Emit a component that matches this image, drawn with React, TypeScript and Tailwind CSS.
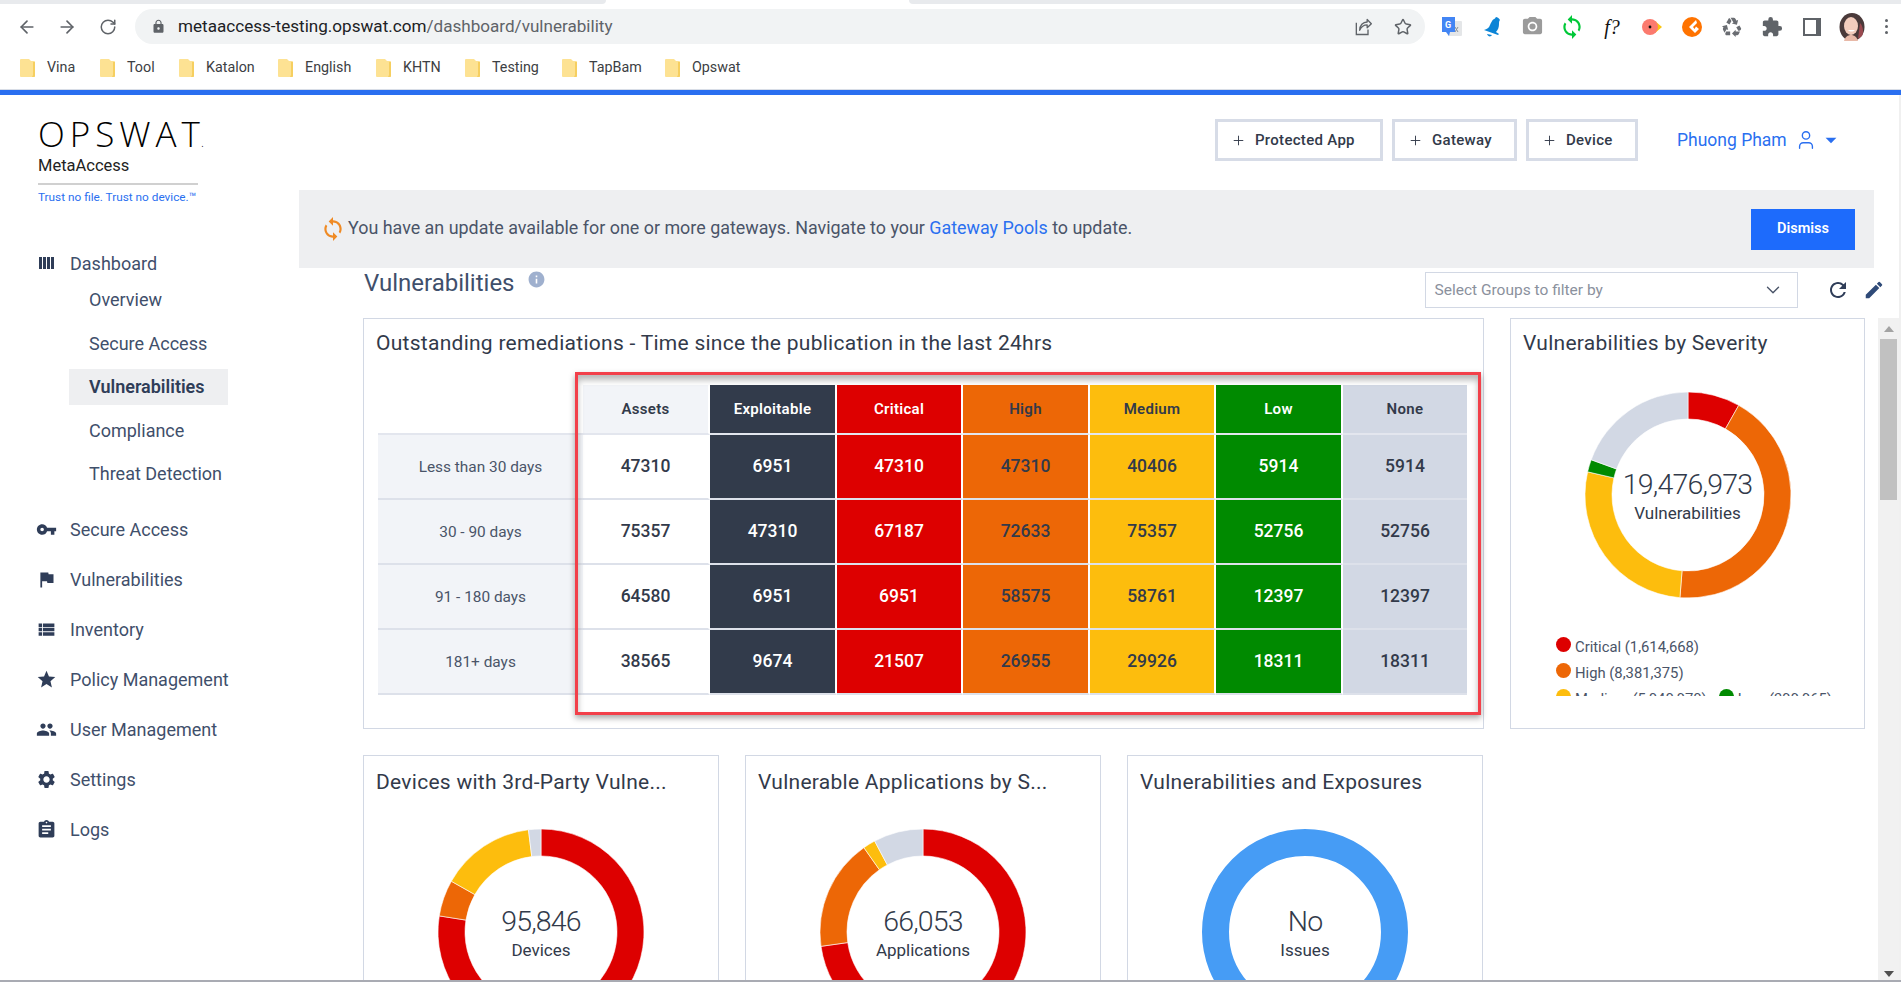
import { ArrowLeft, ArrowRight, RotateCw, Star, Plus, User, ChevronDown } from 'lucide-react';
import {
  MdVpnKey, MdFlag, MdViewList, MdStar, MdPeople, MdSettings, MdAssignment,
  MdLock, MdCameraAlt, MdSync, MdExtension, MdRecycling, MdRefresh, MdEdit, MdInfo, MdArrowDropDown,
} from 'react-icons/md';

const bookmarks = [
  { name: 'Vina', w: 'w-[80px]' },
  { name: 'Tool', w: 'w-[79px]' },
  { name: 'Katalon', w: 'w-[99px]' },
  { name: 'English', w: 'w-[98px]' },
  { name: 'KHTN', w: 'w-[89px]' },
  { name: 'Testing', w: 'w-[97px]' },
  { name: 'TapBam', w: 'w-[103px]' },
  { name: 'Opswat', w: 'w-[90px]' },
];

const subNav = ['Overview', 'Secure Access', 'Vulnerabilities', 'Compliance', 'Threat Detection'];

const mainNav = [
  { name: 'Secure Access', icon: MdVpnKey },
  { name: 'Vulnerabilities', icon: MdFlag },
  { name: 'Inventory', icon: MdViewList },
  { name: 'Policy Management', icon: MdStar },
  { name: 'User Management', icon: MdPeople },
  { name: 'Settings', icon: MdSettings },
  { name: 'Logs', icon: MdAssignment },
];

const rows = [
  { label: 'Less than 30 days', values: ['47310', '6951', '47310', '47310', '40406', '5914', '5914'] },
  { label: '30 - 90 days', values: ['75357', '47310', '67187', '72633', '75357', '52756', '52756'] },
  { label: '91 - 180 days', values: ['64580', '6951', '6951', '58575', '58761', '12397', '12397'] },
  { label: '181+ days', values: ['38565', '9674', '21507', '26955', '29926', '18311', '18311'] },
];

const columns = [
  { name: 'Assets', head: 'bg-[#f2f4f8] text-[#323a4a]', cell: 'bg-white text-[#323a4a]' },
  { name: 'Exploitable', head: 'bg-[#323b4b] text-white', cell: 'bg-[#323b4b] text-white' },
  { name: 'Critical', head: 'bg-[#dd0000] text-white', cell: 'bg-[#dd0000] text-white' },
  { name: 'High', head: 'bg-[#ed6706] text-[#323a4a]', cell: 'bg-[#ed6706] text-[#323a4a]' },
  { name: 'Medium', head: 'bg-[#fdbd0d] text-[#323a4a]', cell: 'bg-[#fdbd0d] text-[#323a4a]' },
  { name: 'Low', head: 'bg-[#008a00] text-white', cell: 'bg-[#008a00] text-white' },
  { name: 'None', head: 'bg-[#d2d8e4] text-[#323a4a]', cell: 'bg-[#d2d8e4] text-[#323a4a]' },
];

function Folder() {
  return (
    <svg width="15" height="18" viewBox="0 0 15 18" className="shrink-0">
      <path d="M1 0h8l2 2h3a1 1 0 0 1 1 1v14a1 1 0 0 1-1 1H1a1 1 0 0 1-1-1V1a1 1 0 0 1 1-1z" fill="#fde293" />
      <path d="M12 18h2a1 1 0 0 0 1-1V3h-2v13z" fill="#f6cf60" />
    </svg>
  );
}

function arcPath(from: number, to: number, r1: number, r2: number, c: number) {
  const pt = (a: number, r: number) => {
    const t = ((a - 90) * Math.PI) / 180;
    return `${c + r * Math.cos(t)} ${c + r * Math.sin(t)}`;
  };
  const large = to - from > 180 ? 1 : 0;
  return `M${pt(from, r1)} A${r1} ${r1} 0 ${large} 1 ${pt(to, r1)} L${pt(to, r2)} A${r2} ${r2} 0 ${large} 0 ${pt(from, r2)} Z`;
}

type Segment = { from: number; to: number; color: string };

function Donut({ segments, value, label }: { segments: Segment[]; value: string; label: string }) {
  return (
    <div className="relative w-[206px] h-[206px] shrink-0">
      <svg width="206" height="206" viewBox="0 0 206 206">
        {segments.map((s) =>
          s.to - s.from >= 360 ? (
            <circle key={s.color} cx="103" cy="103" r="89.5" fill="none" stroke={s.color} strokeWidth="27" />
          ) : (
            <path key={s.color} d={arcPath(s.from, s.to, 103, 76, 103)} fill={s.color} stroke="#ffffff" strokeWidth="0.6" />
          ),
        )}
      </svg>
      <div className="absolute inset-0 flex flex-col items-center justify-center text-[#323a4a]">
        <span className="text-[28.500px] leading-[36px] font-light tracking-[-0.8px]">{value}</span>
        <span className="text-[17px] leading-[22px] -mt-[1px]">{label}</span>
      </div>
    </div>
  );
}

function BottomCard({ title, children }: { title: string; children: React.ReactNode }) {
  return (
    <div className="w-[356px] h-[400px] shrink-0 border border-[#d2d8e4] px-[12px] pt-[14px]">
      <h3 className="text-[21px] leading-[24px] text-[#323a4a] tracking-[0.27px] whitespace-nowrap">{title}</h3>
      <div className="flex justify-center mt-[35px]">{children}</div>
    </div>
  );
}

function ExtensionIcons() {
  return (
    <div className="flex items-center">
      <div className="w-[40px] flex justify-center">
        <svg width="22" height="22" viewBox="0 0 22 22">
          <rect x="7" y="5" width="14" height="15" rx="1" fill="#e4e6e8" />
          <path d="M14 11l3 5m0-5l-3 5" stroke="#8a8f96" strokeWidth="1" />
          <path d="M1 1h13v15H9l-1 4-3-4H1z" fill="#4285f4" />
          <text x="4" y="12" fontSize="9" fontWeight="700" fill="#fff" fontFamily="Roboto, sans-serif">G</text>
        </svg>
      </div>
      <div className="w-[40px] flex justify-center">
        <svg width="22" height="22" viewBox="0 0 22 22">
          <path d="M15 1c1 0 3 1 4 3-1 1-1 2-1 4 0 3-1 6-3 8l3 2-1 1-14-5c3-1 5-2 6-5 1-2 2-5 4-6 1 0 1-1 2-2z" fill="#0b84d6" />
          <path d="M6 18c1 3 4 3 5 1z" fill="#0b84d6" />
        </svg>
      </div>
      <div className="w-[40px] flex justify-center text-[#9b9b9b]"><MdCameraAlt size={23} /></div>
      <div className="w-[40px] flex justify-center text-[#00c838]"><MdSync size={26} /></div>
      <div className="w-[40px] flex justify-center text-[20px] leading-none italic text-[#111] font-['Liberation_Serif',serif]">f?</div>
      <div className="w-[40px] flex justify-center">
        <svg width="22" height="18" viewBox="0 0 22 18">
          <path d="M14 3l7 6-7 6z" fill="#fbc60f" />
          <circle cx="9" cy="9" r="8" fill="#fb7a6e" />
          <circle cx="9" cy="9" r="1.4" fill="#111" />
        </svg>
      </div>
      <div className="w-[40px] flex justify-center">
        <svg width="20" height="20" viewBox="0 0 20 20">
          <circle cx="10" cy="10" r="10" fill="#ff7300" />
          <path d="M14 3L7 10l6 6 4-4-3-2.500-1.500 2.500-1.500-2 4-4z" fill="#fff" />
        </svg>
      </div>
      <div className="w-[40px] flex justify-center text-[#6a6d72]"><MdRecycling size={22} /></div>
      <div className="w-[40px] flex justify-center text-[#5f6368]"><MdExtension size={22} /></div>
      <div className="w-[40px] flex justify-center">
        <div className="w-[18px] h-[18px] border-2 border-r-[5px] border-[#5f6368]" />
      </div>
      <div className="w-[40px] flex justify-center">
        <svg width="26" height="28" viewBox="0 0 26 28">
          <ellipse cx="13" cy="14" rx="12.500" ry="14" fill="#4a3a3a" />
          <path d="M21 10c3 3 4 9 2 13l-4 3z" fill="#9a4a50" />
          <ellipse cx="12" cy="13" rx="7" ry="9" fill="#f3cdbd" />
          <path d="M5 28c1-4 4-6 7-6s6 2 7 6z" fill="#e8b9a8" />
          <path d="M9 17c2 2 5 2 7 0z" fill="#fff" />
        </svg>
      </div>
      <div className="w-[28px] flex justify-center">
        <div className="flex flex-col gap-[3px]">
          <span className="w-[3px] h-[3px] rounded-full bg-[#5f6368]" />
          <span className="w-[3px] h-[3px] rounded-full bg-[#5f6368]" />
          <span className="w-[3px] h-[3px] rounded-full bg-[#5f6368]" />
        </div>
      </div>
    </div>
  );
}

function BrowserChrome() {
  return (
    <div className="shrink-0 font-['Roboto',sans-serif]">
      {/* tab strip */}
      <div className="flex h-[4px]">
        <div className="w-[606px] bg-[#e8eaed] rounded-br-lg" />
        <div className="w-[303px] bg-white" />
        <div className="flex-1 bg-[#e8eaed] rounded-bl-lg" />
      </div>
      {/* toolbar */}
      <div className="flex items-center h-[48px] pt-[5px] pb-[8px]">
        <div className="w-[135px] flex items-center text-[#5f6368]">
          <ArrowLeft size={20} className="ml-[17px]" />
          <ArrowRight size={20} className="ml-[20px]" />
          <RotateCw size={18} className="ml-[22px]" />
        </div>
        <div className="w-[1290px] h-[35px] rounded-full bg-[#f1f3f4] flex items-center pl-[16px] pr-[13px]">
          <MdLock size={15} className="text-[#5f6368]" />
          <span className="ml-[12px] text-[17.100px] text-[#202124]">
            metaaccess-testing.opswat.com<span className="text-[#5f6368]">/dashboard/vulnerability</span>
          </span>
          <svg width="20" height="20" viewBox="0 0 24 24" fill="none" stroke="#5f6368" strokeWidth="1.6" className="ml-auto">
            <path d="M4 7v14h14v-6" />
            <path d="M8 16c0-6 4-10 9-10V3l5 5-5 5V9.500c-4 0-7 2-9 6.500z" strokeLinejoin="round" />
          </svg>
          <Star size={18} className="ml-[21px] text-[#5f6368]" />
        </div>
        <div className="ml-[7px]"><ExtensionIcons /></div>
      </div>
      {/* bookmarks */}
      <div className="flex items-start h-[37px] pl-[20px] pt-[5px]">
        {bookmarks.map((b) => (
          <div key={b.name} className={`${b.w} flex items-center gap-[12px] text-[14.300px] text-[#3c4043]`}>
            <Folder />
            <span>{b.name}</span>
          </div>
        ))}
      </div>
      <div className="h-[6px] bg-[#2a6ff0] border-t border-[#d8dde6]" />
    </div>
  );
}

function Sidebar() {
  return (
    <aside className="w-[299px] shrink-0 pl-[36px] text-[#3f4f6b]">
      <div className="pl-[2px] pt-[26px]">
        <div className="text-[35px] leading-[25px] font-light tracking-[5px] text-black font-['Open_Sans',sans-serif] whitespace-nowrap">OPSWAT<span className="text-[12px] tracking-normal -ml-[4px]">.</span></div>
        <div className="text-[16.500px] leading-[22px] text-[#222]">MetaAccess</div>
        <div className="mt-[6px] w-[160px] h-[2px] bg-[#d0d0d0]" />
        <div className="mt-[5px] text-[11.800px] leading-[14px] text-[#2a6ff0]">Trust no file. Trust no device.&trade;</div>
      </div>
      <div className="mt-[42px] flex items-center h-[34px] text-[18px]">
        <svg width="21" height="12" viewBox="0 0 21 12" className="shrink-0 text-[#2f3d58]" fill="currentColor">
          <rect x="3" width="3" height="12" />
          <rect x="7" width="3" height="12" />
          <rect x="11" width="3" height="12" />
          <rect x="15" width="3" height="12" />
        </svg>
        <span className="ml-[13px]">Dashboard</span>
      </div>
      <div className="pl-[33px] -mt-[2px]">
        {subNav.map((s) => (
          <div key={s} className="h-[43.500px] flex items-center text-[18px]">
            <span className={s === 'Vulnerabilities' ? 'w-[159px] h-[36px] flex items-center pl-[20px] bg-[#eeeff1] font-semibold text-[#2f3d58]' : 'pl-[20px]'}>{s}</span>
          </div>
        ))}
      </div>
      <div className="mt-[8.500px]">
        {mainNav.map((n) => (
          <div key={n.name} className="h-[50px] flex items-center text-[18px]">
            <n.icon size={21} className="text-[#2f3d58] shrink-0" />
            <span className="ml-[13px]">{n.name}</span>
          </div>
        ))}
      </div>
    </aside>
  );
}

function HeaderActions() {
  const btn = 'h-[42px] border-[3px] border-[#d7dce7] flex items-center pl-[13px] gap-[9px] text-[15px] tracking-[0.3px] font-medium text-[#323a4a]';
  return (
    <div className="flex items-center h-[42px] pl-[916px]">
      <button className={`w-[168px] ${btn}`}><Plus size={15} strokeWidth={1.5} />Protected App</button>
      <button className={`ml-[9px] w-[125px] ${btn}`}><Plus size={15} strokeWidth={1.5} />Gateway</button>
      <button className={`ml-[9px] w-[112px] ${btn}`}><Plus size={15} strokeWidth={1.5} />Device</button>
      <span className="ml-[39px] text-[17.500px] text-[#2a6ff0] whitespace-nowrap">Phuong Pham</span>
      <User size={22} strokeWidth={1.5} className="ml-[8px] text-[#2a6ff0]" />
      <MdArrowDropDown size={26} className="ml-[1px] text-[#2a6ff0]" />
    </div>
  );
}

function Banner() {
  return (
    <div className="mt-[29px] w-[1575px] h-[78px] bg-[#eeeff1] flex items-center pl-[24px] pr-[19px]">
      <MdSync size={26} className="text-[#ef8a24] -ml-[3px]" />
      <span className="ml-[2px] text-[17.900px] text-[#4a5468] whitespace-nowrap -mt-[2px]">
        You have an update available for one or more gateways. Navigate to your <span className="text-[#2a6ff0]">Gateway Pools</span> to update.
      </span>
      <button className="ml-auto w-[104px] h-[41px] bg-[#1d6bfc] text-white text-[14.500px] font-semibold">Dismiss</button>
    </div>
  );
}

function TitleRow() {
  return (
    <div className="flex items-start h-[50px] pl-[65px]">
      <h1 className="text-[24px] leading-[30px] text-[#3f4f6b]">Vulnerabilities</h1>
      <MdInfo size={19} className="ml-[12px] mt-[2px] text-[#9fb0ce]" />
      <div className="ml-[879px] mt-[4px] w-[373px] h-[36px] border border-[#d2d8e4] flex items-center pl-[9px] pr-[13px] text-[15.500px] text-[#8b919d]">
        <span className="pt-[2px]">Select Groups to filter by</span>
        <ChevronDown size={22} strokeWidth={1.5} className="ml-auto text-[#4a5468]" />
      </div>
      <MdRefresh size={24} className="ml-[28px] mt-[10px] text-[#2f3d58]" />
      <MdEdit size={22} className="ml-[13px] mt-[11px] text-[#2f4a78]" />
    </div>
  );
}

function RemediationTable() {
  return (
    <div className="grid grid-cols-[205px_127px_127px_126px_127px_126px_127px_124px] grid-rows-[50px_65px_65px_65px_65px] w-[1089px] ml-[2px] mt-[30px]">
      <div className="border-b-2 border-[#e3e6ee]" />
      {columns.map((c, i) => (
        <div key={c.name} className={`${c.head} ${i < 6 ? 'border-r-2 border-r-white' : ''} border-b-2 border-b-[#e3e6ee] flex items-center justify-center text-[15px] tracking-[0.3px] font-semibold`}>
          {c.name}
        </div>
      ))}
      {rows.map((r) => (
        <div key={r.label} className="contents">
          <div className="bg-[#f2f4f8] border-b-2 border-[#dde1ea] flex items-center justify-center text-[15.400px] text-[#4a5468] pt-[2px]">{r.label}</div>
          {r.values.map((v, i) => (
            <div key={columns[i].name} className={`${columns[i].cell} ${i < 6 ? 'border-r-2 border-r-white' : ''} border-b-2 border-b-[#dde1ea] flex items-center justify-center text-[17.500px] font-medium pb-[1px]`}>
              {v}
            </div>
          ))}
        </div>
      ))}
    </div>
  );
}

function Legend() {
  const dot = 'w-[15px] h-[15px] rounded-full mb-[6px] shrink-0';
  return (
    <div className="mt-[36px] ml-[33px] h-[62px] overflow-hidden text-[14.800px] leading-[26px] text-[#4a5468] whitespace-nowrap">
      <div className="flex items-center h-[26px] gap-[4px]"><span className={`${dot} bg-[#dd0000]`} />Critical (1,614,668)</div>
      <div className="flex items-center h-[26px] gap-[4px]"><span className={`${dot} bg-[#ed6706]`} />High (8,381,375)</div>
      <div className="flex items-center h-[26px] gap-[4px]">
        <span className={`${dot} bg-[#fdbd0d]`} />Medium (5,040,970)
        <span className={`${dot} bg-[#008a00] ml-[8px]`} />Low (399,965)
      </div>
    </div>
  );
}

function Scrollbar() {
  return (
    <div className="w-[21px] shrink-0 bg-[#f1f1f1] flex flex-col items-center h-full">
      <div className="mt-[8px] w-0 h-0 border-x-[5px] border-x-transparent border-b-[6px] border-b-[#a3a3a3]" />
      <div className="mt-[7px] w-[17px] h-[161px] bg-[#c1c1c1]" />
      <div className="mt-auto mb-[5px] w-0 h-0 border-x-[5px] border-x-transparent border-t-[6px] border-t-[#505050]" />
    </div>
  );
}

export default function App() {
  return (
    <div className="relative w-[1901px] h-[982px] overflow-hidden bg-white flex flex-col font-['Roboto',sans-serif]">
      <BrowserChrome />
      <div className="flex flex-1 min-h-0 border-r-2 border-[#f0f0f0]">
        <Sidebar />
        <main className="flex-1 min-w-0 flex flex-col pt-[24px]">
          <HeaderActions />
          <Banner />
          <TitleRow />
          <div className="flex flex-1 min-h-0 pl-[64px]">
            <div className="flex-1 min-w-0 overflow-hidden">
              <div className="flex gap-[26px]">
                <section className="relative w-[1121px] h-[411px] border border-[#d2d8e4] pt-[12px] pl-[12px]">
                  <h2 className="text-[21px] leading-[24px] text-[#323a4a] tracking-[0.27px]">Outstanding remediations - Time since the publication in the last 24hrs</h2>
                  <RemediationTable />
                  {/* annotation box drawn over the table */}
                  <div className="absolute left-[211px] top-[53px] w-[906px] h-[343px] border-[3px] border-[#f2404a] pointer-events-none shadow-[0_3px_6px_rgba(0,0,0,0.35),inset_0_5px_6px_rgba(0,0,0,0.28)]" />
                </section>
                <section className="w-[355px] h-[411px] border border-[#d2d8e4] pt-[12px] pl-[12px]">
                  <h2 className="text-[21px] leading-[24px] text-[#323a4a] tracking-[0.27px] whitespace-nowrap">Vulnerabilities by Severity</h2>
                  <div className="flex justify-center mt-[37px] pr-[12px]">
                    <Donut
                      value="19,476,973"
                      label="Vulnerabilities"
                      segments={[
                        { from: 0, to: 29.5, color: '#dd0000' },
                        { from: 29.5, to: 184.5, color: '#ed6706' },
                        { from: 184.5, to: 283, color: '#fdbd0d' },
                        { from: 283, to: 290, color: '#008a00' },
                        { from: 290, to: 360, color: '#d2d8e4' },
                      ]}
                    />
                  </div>
                  <Legend />
                </section>
              </div>
              <div className="flex gap-[26px] mt-[26px]">
                <BottomCard title="Devices with 3rd-Party Vulne...">
                  <Donut
                    value="95,846"
                    label="Devices"
                    segments={[
                      { from: 0, to: 279, color: '#dd0000' },
                      { from: 279, to: 299.5, color: '#ed6706' },
                      { from: 299.5, to: 353, color: '#fdbd0d' },
                      { from: 353, to: 360, color: '#d2d8e4' },
                    ]}
                  />
                </BottomCard>
                <BottomCard title="Vulnerable Applications by S...">
                  <Donut
                    value="66,053"
                    label="Applications"
                    segments={[
                      { from: 0, to: 262, color: '#dd0000' },
                      { from: 262, to: 325, color: '#ed6706' },
                      { from: 325, to: 332, color: '#fdbd0d' },
                      { from: 332, to: 360, color: '#d2d8e4' },
                    ]}
                  />
                </BottomCard>
                <BottomCard title="Vulnerabilities and Exposures">
                  <Donut value="No" label="Issues" segments={[{ from: 0, to: 360, color: '#469cf5' }]} />
                </BottomCard>
              </div>
            </div>
            <Scrollbar />
          </div>
        </main>
      </div>
      {/* window edge at the very bottom of the capture */}
      <div className="absolute left-0 right-0 bottom-0 h-[2px] bg-[#a9abb3]" />
    </div>
  );
}
